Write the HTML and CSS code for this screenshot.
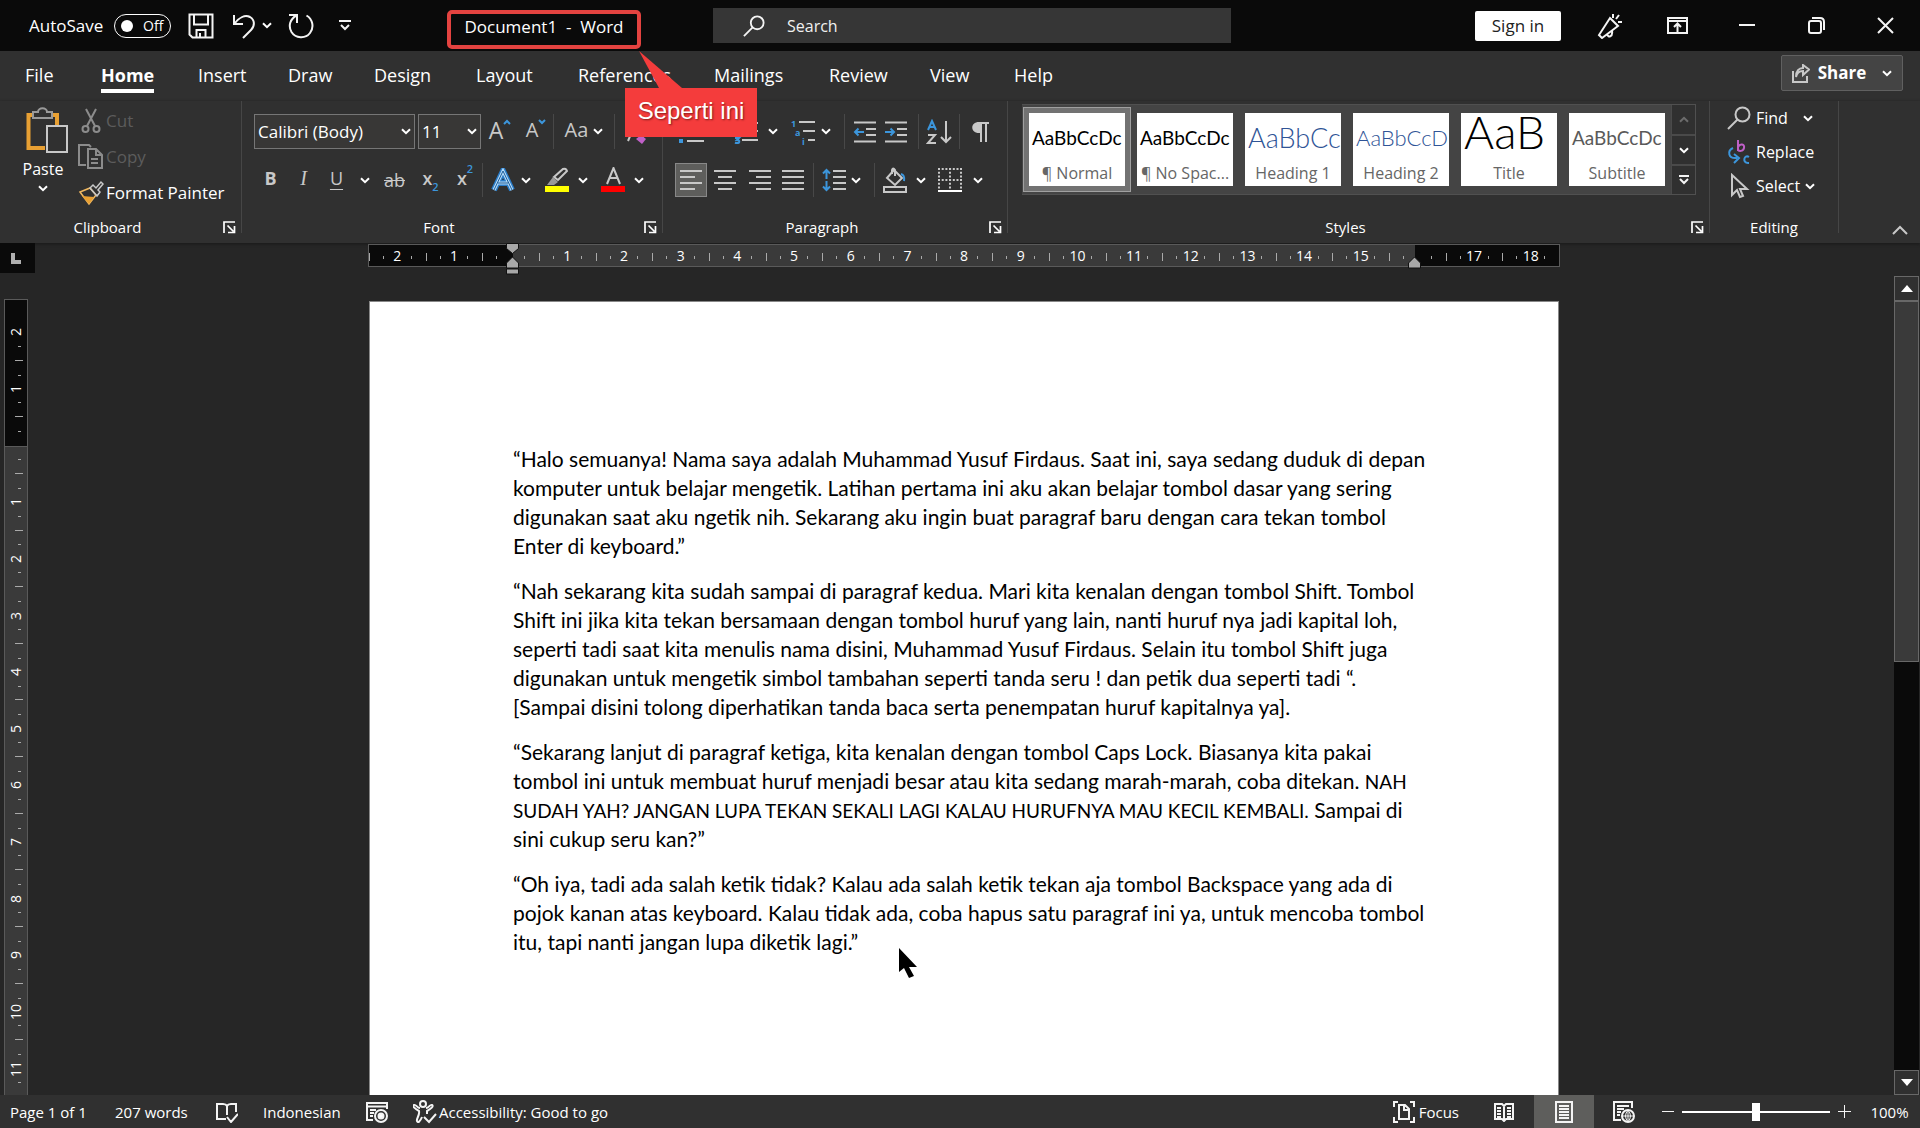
FILE: index.html
```html
<!DOCTYPE html>
<html lang="id">
<head>
<meta charset="utf-8">
<title>Document1 - Word</title>
<link rel="stylesheet" href="styles.css">
</head>
<body>
<svg class="sprite" aria-hidden="true">
  <symbol id="chev" viewBox="0 0 10 7"><path d="M1 1.200l4 4 4-4" fill="none" stroke="currentColor" stroke-width="2"/></symbol>
  <symbol id="launch" viewBox="0 0 13 13"><path d="M1 12V1h11M4.500 4.500l6 6M11.500 5v6.500H5" fill="none" stroke="currentColor" stroke-width="1.700"/></symbol>
  <symbol id="lens" viewBox="0 0 24 24"><circle cx="15.500" cy="8.500" r="7"/><path d="M10.500 13.500L1 23"/></symbol>
</svg>

<header class="titlebar">
  <div class="quick">
    <label class="autosave" for="autosave">AutoSave</label>
    <span class="toggle"><input type="checkbox" id="autosave"><span class="toggle-text">Off</span></span>
    <button class="ic save" aria-label="Save"><svg width="26" height="26" viewBox="0 0 26 26"><path d="M1.500 1.500h23v23H4.500l-3-3zM6 2v9.500h14V2M8.500 24v-7h9v7M12 20v4"/></svg></button>
    <button class="ic undo" aria-label="Undo"><svg width="24" height="26" viewBox="0 0 24 26"><path d="M2 2v9h9M2.500 10.500C7 4.500 13 1.500 18 4c5 3 5 9 1 13l-8 8"/></svg></button>
    <button class="ic undo-more" aria-label="Undo list"><svg class="chev"><use href="#chev"/></svg></button>
    <button class="ic redo" aria-label="Repeat"><svg width="26" height="26" viewBox="0 0 26 26"><path d="M1 2h8v8M8.500 2.500C2 6 0 13 3.500 19c4 6.500 14 7 18.500 1 4.500-6 2.500-14-3.500-17.500"/></svg></button>
    <button class="ic customize" aria-label="Customize Quick Access Toolbar"><svg width="12" height="11" viewBox="0 0 12 11"><path d="M0 1h12M2 5l4 4 4-4"/></svg></button>
  </div>
  <h1 class="doc-title">Document1&nbsp; -&nbsp; Word</h1>
  <label class="search">
    <svg width="22" height="22" viewBox="0 0 24 24"><use href="#lens"/></svg>
    <input type="text" placeholder="Search" aria-label="Search">
  </label>
  <div class="window">
    <button class="signin">Sign in</button>
    <button class="ic" aria-label="Coming soon"><svg width="26" height="26" viewBox="0 0 26 26"><path d="M13 5l8 8L5 25l-3-3zM10 21c1 4 6 3 5-3M16 1v4M22 2l-3 4M25 9h-4"/></svg></button>
    <button class="ic" aria-label="Ribbon display options"><svg width="21" height="17" viewBox="0 0 21 17"><path d="M1 1h19v15H1zM1 4h19M10.500 15V6.500M7 10l3.500-3.500L14 10"/></svg></button>
    <button class="ic" aria-label="Minimize"><svg width="16" height="16" viewBox="0 0 16 16"><path d="M0 7h16"/></svg></button>
    <button class="ic" aria-label="Restore"><svg width="17" height="17" viewBox="0 0 17 17"><rect x="1" y="4" width="12" height="12" rx="2"/><path d="M4 1h8q4 0 4 4v8"/></svg></button>
    <button class="ic close" aria-label="Close"><svg width="17" height="17" viewBox="0 0 17 17"><path d="M1 1l15 15M16 1L1 16"/></svg></button>
  </div>
</header>

<nav class="tabs">
  <div class="tab-list">
    <button>File</button><button class="active">Home</button><button>Insert</button><button>Draw</button><button>Design</button><button>Layout</button><button>References</button><button>Mailings</button><button>Review</button><button>View</button><button>Help</button>
  </div>
  <button class="share"><svg class="ln" width="18" height="19" viewBox="0 0 18 19"><path d="M1 7v11h14v-6M4 13c1-5 4-6 7-6v4l6-5.500L11 1v3C7 4 4 7 4 13z"/></svg>Share<svg class="chev"><use href="#chev"/></svg></button>
</nav>

<section class="ribbon">
  <div class="group clipboard">
    <div class="clip-body">
      <button class="paste"><svg width="42" height="46" viewBox="0 0 42 46" fill="none"><path d="M10 8H2.500v33H19" stroke="#e8a033" stroke-width="4"/><path d="M25 8h6v10" stroke="#e8a033" stroke-width="4"/><path d="M7 5h5c0-5 9-5 9 0h5v6H7z" stroke="#9a9a9a" stroke-width="2" fill="#303030"/><rect x="21" y="19" width="20" height="26" stroke="#c8c8c8" stroke-width="2" fill="#303030"/></svg><span>Paste</span><svg class="chev"><use href="#chev"/></svg></button>
      <div class="clip-list">
        <button disabled><svg class="dim" width="26" height="26" viewBox="0 0 26 26"><path d="M8 1l9 17M18 1L9 18"/><circle cx="7.500" cy="21" r="3"/><circle cx="18.500" cy="21" r="3"/></svg>Cut</button>
        <button disabled><svg class="dim" width="26" height="26" viewBox="0 0 26 26"><path d="M8 21H1V1h10l2 2M10 5h8l6 6v13H10zM18 5v6h6M13 15h7M13 19h7"/></svg>Copy</button>
        <button><svg width="26" height="26" viewBox="0 0 26 26" fill="none"><path d="M2 12l10-4 6 7-7 9z" stroke="#f0b860" stroke-width="1.500"/><path d="M4 16l12 1-5 7z" fill="#e8a033"/><path d="M12 8l3-3 3 3 5-6 2 2-5 6 2 2-3 4z" stroke="#c8c8c8" stroke-width="1.500"/></svg>Format Painter</button>
      </div>
    </div>
    <footer><span>Clipboard</span><button class="launch" aria-label="Clipboard settings"><svg><use href="#launch"/></svg></button></footer>
  </div>

  <div class="group font">
    <div class="tools">
      <div class="row font-1">
        <span class="combo"><select aria-label="Font"><option>Calibri (Body)</option></select><svg class="chev"><use href="#chev"/></svg></span>
        <span class="combo"><select aria-label="Font size"><option>11</option></select><svg class="chev"><use href="#chev"/></svg></span>
        <button aria-label="Increase font size"><span class="lt">A</span><svg class="blue sup" width="8" height="6" viewBox="0 0 8 6"><path d="M1 5l3-3 3 3"/></svg></button>
        <button aria-label="Decrease font size"><span class="lt small">A</span><svg class="blue sup" width="8" height="6" viewBox="0 0 8 6"><path d="M1 1l3 3 3-3"/></svg></button>
        <i class="sep"></i>
        <button class="case" aria-label="Change case"><span class="lt small">Aa</span><svg class="chev"><use href="#chev"/></svg></button>
        <i class="sep"></i>
        <button aria-label="Clear formatting"><svg width="26" height="26" viewBox="0 0 26 26"><path class="ln" d="M2 22L10 3l7 17"/><path d="M10 20l5-4 5 4-4 5z" fill="#c060c8"/></svg></button>
      </div>
      <div class="row font-2">
        <button class="bold">B</button><button class="italic">I</button><button class="under">U</button>
        <button aria-label="Underline style"><svg class="chev"><use href="#chev"/></svg></button>
        <button class="strike">ab</button>
        <button class="script">x<sub>2</sub></button>
        <button class="script">x<sup>2</sup></button>
        <i class="sep"></i>
        <button class="end" aria-label="Text effects"><svg width="24" height="24" viewBox="0 0 24 24"><path d="M3 22L12 3l9 19M7 15h10" fill="none" stroke="#2a7cc8" stroke-width="6"/><path d="M3 22L12 3l9 19M7 15h10" fill="none" stroke="#b8dcf8" stroke-width="3"/><path d="M3 22L12 3l9 19M7 15h10" fill="none" stroke="#1c5c98" stroke-width="1"/></svg></button>
        <button aria-label="Text effects list"><svg class="chev"><use href="#chev"/></svg></button>
        <button class="end" aria-label="Highlight colour"><svg width="24" height="26" viewBox="0 0 24 26"><path class="ln" d="M9 10l9-8q3-1 4 2l-9 9z"/><path d="M8 10l5 5-4 3H2z" fill="#999"/><path d="M0 19h24v6H0z" fill="#ff0"/></svg></button>
        <button aria-label="Highlight list"><svg class="chev"><use href="#chev"/></svg></button>
        <button class="end" aria-label="Font colour"><svg width="24" height="26" viewBox="0 0 24 26"><path class="ln" d="M6 17l6.500-16L19 17M8 11h9"/><path d="M0 19h24v6H0z" fill="#f00"/></svg></button>
        <button aria-label="Font colour list"><svg class="chev"><use href="#chev"/></svg></button>
      </div>
    </div>
    <footer><span>Font</span><button class="launch" aria-label="Font settings"><svg><use href="#launch"/></svg></button></footer>
  </div>

  <div class="group">
    <div class="tools">
      <div class="row para-1">
        <button aria-label="Bullets"><svg width="26" height="22" viewBox="0 0 26 22"><path class="ln" d="M9 3h17M9 11h17M9 20h17"/><path d="M1 1h4v4H1zM1 9h4v4H1zM1 18h4v4H1z" fill="#3c96dc"/></svg></button>
        <button aria-label="Bullet list"><svg class="chev"><use href="#chev"/></svg></button>
        <button class="end" aria-label="Numbering"><svg width="24" height="24" viewBox="0 0 24 24"><path class="ln" d="M8 3h16M8 11h16M8 20h16"/><path class="blue" d="M1 18h4l-2 2q3 0 2 2.500-2 1-4 0"/></svg></button>
        <button aria-label="Numbering list"><svg class="chev"><use href="#chev"/></svg></button>
        <button class="end" aria-label="Multilevel list"><svg width="24" height="26" viewBox="0 0 24 26"><path class="ln" d="M8 3h16M12 12h12M17 21h7"/><text x="0" y="8">1</text><text x="4" y="17">a</text><text x="11" y="26">i</text></svg></button>
        <button aria-label="Multilevel styles"><svg class="chev"><use href="#chev"/></svg></button>
        <i class="sep"></i>
        <button aria-label="Decrease indent"><svg class="ln" width="24" height="22" viewBox="0 0 24 22"><path d="M1 1.500h22M13 8h10M13 14h10M1 20.500h22"/><path class="blue" d="M11 11H2M5.500 7.500L2 11l3.500 3.500"/></svg></button>
        <button aria-label="Increase indent"><svg class="ln" width="24" height="22" viewBox="0 0 24 22"><path d="M1 1.500h22M13 8h10M13 14h10M1 20.500h22"/><path class="blue" d="M1 11h9M6.500 7.500L10 11l-3.500 3.500"/></svg></button>
        <i class="sep"></i>
        <button aria-label="Sort"><svg width="26" height="26" viewBox="0 0 26 26"><path class="blue" d="M2 11L6 2l4 9M3 8h6"/><path class="ln" d="M2 16h7l-7 8h8M20 2v21M15 18l5 5 5-5"/></svg></button>
        <i class="sep"></i>
        <button aria-label="Show marks"><svg width="18" height="22" viewBox="0 0 18 22"><path d="M8 12C-1 12-1 1 8 1h10v2h-2v18h-2V3h-3v18H9V12z" fill="#c8c8c8"/></svg></button>
      </div>
      <div class="row para-2">
        <button class="on" aria-label="Align left"><svg class="ln" width="22" height="22" viewBox="0 0 22 22"><path d="M0 2h22M0 8h15M0 14h22M0 20h15"/></svg></button>
        <button aria-label="Centre"><svg class="ln" width="22" height="22" viewBox="0 0 22 22"><path d="M0 2h22M4 8h14M0 14h22M4 20h14"/></svg></button>
        <button aria-label="Align right"><svg class="ln" width="22" height="22" viewBox="0 0 22 22"><path d="M0 2h22M7 8h15M0 14h22M7 20h15"/></svg></button>
        <button aria-label="Justify"><svg class="ln" width="22" height="22" viewBox="0 0 22 22"><path d="M0 2h22M0 8h22M0 14h22M0 20h22"/></svg></button>
        <i class="sep"></i>
        <button class="end" aria-label="Line spacing"><svg class="ln" width="24" height="24" viewBox="0 0 24 24"><path d="M11 3h13M11 9h13M11 15h13M11 21h13"/><path class="blue" d="M4.500 2v9M1 5.500L4.500 2 8 5.500M4.500 13v9M1 18.500L4.500 22 8 18.500"/></svg></button>
        <button aria-label="Spacing list"><svg class="chev"><use href="#chev"/></svg></button>
        <i class="sep"></i>
        <button aria-label="Shading"><svg class="ln" width="24" height="26" viewBox="0 0 24 26"><path d="M11 3l8 8-7 7-8-7zM9 7V3q1-3 3 0v6"/><path class="blue" d="M18 7q4 1 3 7"/><rect x="1" y="20" width="22" height="5"/></svg></button>
        <button aria-label="Shading list"><svg class="chev"><use href="#chev"/></svg></button>
        <button class="end" aria-label="Borders"><svg class="ln" width="24" height="24" viewBox="0 0 24 24"><path d="M0 1h23M0 12h23M1 0v21M12 0v21M23 0v21" stroke-dasharray="2 1.700"/><path d="M0 23h24" stroke="#fff"/></svg></button>
        <button aria-label="Border list"><svg class="chev"><use href="#chev"/></svg></button>
      </div>
    </div>
    <footer><span>Paragraph</span><button class="launch" aria-label="Paragraph settings"><svg><use href="#launch"/></svg></button></footer>
  </div>

  <div class="group styles">
    <div class="gallery">
      <div class="cards">
        <button class="card selected"><span class="prev">AaBbCcDc</span><span class="name">¶ Normal</span></button>
        <button class="card"><span class="prev">AaBbCcDc</span><span class="name">¶ No Spac...</span></button>
        <button class="card"><span class="prev h1">AaBbCc</span><span class="name">Heading 1</span></button>
        <button class="card"><span class="prev h2">AaBbCcD</span><span class="name">Heading 2</span></button>
        <button class="card"><span class="prev title">AaB</span><span class="name">Title</span></button>
        <button class="card"><span class="prev sub">AaBbCcDc</span><span class="name">Subtitle</span></button>
      </div>
      <div class="scroll">
        <button disabled aria-label="Previous styles"><svg class="chev up"><use href="#chev"/></svg></button>
        <button aria-label="Next styles"><svg class="chev"><use href="#chev"/></svg></button>
        <button aria-label="More styles"><svg class="ln white" width="12" height="10" viewBox="0 0 12 10"><path d="M1 1h10M2 4l4 4 4-4"/></svg></button>
      </div>
    </div>
    <footer><span>Styles</span><button class="launch" aria-label="Style settings"><svg><use href="#launch"/></svg></button></footer>
  </div>

  <div class="group editing">
    <div class="edit-list">
      <button><svg class="ln" width="24" height="24" viewBox="0 0 24 24"><use href="#lens"/></svg><span class="find">Find</span><svg class="chev"><use href="#chev"/></svg></button>
      <button><svg class="ln" width="24" height="26" viewBox="0 0 24 26"><path class="blue" d="M6 9c-6 3-5 11 4 10M7 15l5 4-5 5M22 18c-5-3-7 6-1 6h1"/><path stroke="#c060c8" d="M11 1v11M11 8c2-4 7-3 6 1s-5 3-6 2"/></svg><span>Replace</span></button>
      <button><svg class="ln" width="24" height="26" viewBox="0 0 24 26"><path d="M5 2v20l5-5 3 7 3-1-3-7h7z"/></svg><span>Select</span><svg class="chev"><use href="#chev"/></svg></button>
    </div>
    <footer><span>Editing</span></footer>
  </div>
  <button class="collapse" aria-label="Collapse the ribbon"><svg class="ln" width="16" height="10" viewBox="0 0 16 10"><path d="M1 9l7-7 7 7"/></svg></button>
</section>

<div class="callout"><svg width="44" height="37" viewBox="0 0 44 37"><path d="M0 0l43 37H20z" fill="#f43c3c"/></svg><span>Seperti ini</span></div>

<main class="work">
  <div class="side">
    <button class="corner" aria-label="Tab stop"><svg width="10" height="11" viewBox="0 0 10 11"><path d="M0 0h4v7h6v4H0z" fill="#b0b0b0"/></svg></button>
    <div class="vruler"><span class="bare"><b>2</b></span><span><b>1</b></span><span></span><span><b>1</b></span><span><b>2</b></span><span><b>3</b></span><span><b>4</b></span><span><b>5</b></span><span><b>6</b></span><span><b>7</b></span><span><b>8</b></span><span><b>9</b></span><span><b>10</b></span><span><b>11</b></span></div>
  </div>
  <div class="canvas">
    <div class="hruler">
      <span>2</span><span>1</span><span></span><span>1</span><span>2</span><span>3</span><span>4</span><span>5</span><span>6</span><span>7</span><span>8</span><span>9</span><span>10</span><span>11</span><span>12</span><span>13</span><span>14</span><span>15</span><span></span><span>17</span><span>18</span>
      <svg class="indent" width="13" height="33" viewBox="0 0 13 33"><path d="M.5 1.500h12v5l-6 5-6-5zM.5 26v-5l6-6 6 6v5zM.5 27h12v5H.5z" fill="#a8a8a8" stroke="#111"/></svg>
      <svg class="indent right" width="13" height="33" viewBox="0 0 13 33"><path d="M.5 26v-5l6-6 6 6v5z" fill="#a8a8a8" stroke="#111"/></svg>
    </div>
    <article class="page">
      <p>“Halo semuanya! Nama saya adalah Muhammad Yusuf Firdaus. Saat ini, saya sedang duduk di depan<br>komputer untuk belajar mengetik. Latihan pertama ini aku akan belajar tombol dasar yang sering<br>digunakan saat aku ngetik nih. Sekarang aku ingin buat paragraf baru dengan cara tekan tombol<br>Enter di keyboard.”</p>
      <p>“Nah sekarang kita sudah sampai di paragraf kedua. Mari kita kenalan dengan tombol Shift. Tombol<br>Shift ini jika kita tekan bersamaan dengan tombol huruf yang lain, nanti huruf nya jadi kapital loh,<br>seperti tadi saat kita menulis nama disini, Muhammad Yusuf Firdaus. Selain itu tombol Shift juga<br>digunakan untuk mengetik simbol tambahan seperti tanda seru ! dan petik dua seperti tadi “.<br>[Sampai disini tolong diperhatikan tanda baca serta penempatan huruf kapitalnya ya].</p>
      <p>“Sekarang lanjut di paragraf ketiga, kita kenalan dengan tombol Caps Lock. Biasanya kita pakai<br>tombol ini untuk membuat huruf menjadi besar atau kita sedang marah-marah, coba ditekan. <span class="caps">NAH<br>SUDAH YAH? JANGAN LUPA TEKAN SEKALI LAGI KALAU HURUFNYA MAU KECIL KEMBALI.</span> Sampai di<br>sini cukup seru kan?”</p>
      <p>“Oh iya, tadi ada salah ketik tidak? Kalau ada salah ketik tekan aja tombol Backspace yang ada di<br>pojok kanan atas keyboard. Kalau tidak ada, coba hapus satu paragraf ini ya, untuk mencoba tombol<br>itu, tapi nanti jangan lupa diketik lagi.”</p>
      <svg class="pointer" width="18" height="31" viewBox="0 0 18 31"><path d="M0 0v24l5-4 5 10 5-2-5-9h8z"/></svg>
    </article>
  </div>
  <div class="vscroll">
    <button aria-label="Scroll up"><svg width="12" height="7" viewBox="0 0 12 7"><path d="M6 0l6 7H0z" fill="#fff"/></svg></button>
    <div class="track"><div class="thumb"></div></div>
    <button aria-label="Scroll down"><svg width="12" height="7" viewBox="0 0 12 7"><path d="M0 0h12L6 7z" fill="#fff"/></svg></button>
  </div>
</main>

<footer class="status">
  <div class="st-left">
    <button>Page 1 of 1</button><button>207 words</button>
    <button aria-label="Proofing"><svg class="ln white" width="22" height="22" viewBox="0 0 22 22"><path d="M10 18H1V3h6q3 0 4 2 1-2 4-2h5v8M11 5v9M11 16l4 5 7-8"/></svg></button>
    <button>Indonesian</button>
    <button aria-label="Macros"><svg class="ln white" width="22" height="22" viewBox="0 0 22 22"><path d="M7 19H1V2h20v6M1 5.500h20M4 9h6M4 12h4M4 15h3"/><circle cx="15" cy="15" r="6"/><circle cx="15" cy="15" r="2.500" fill="#fff"/></svg></button>
    <button><svg class="ln white" width="24" height="24" viewBox="0 0 24 24"><circle cx="10" cy="4" r="3"/><path d="M7 8C4 8 3 4 1 5s1 4 5 6c1 4-3 8-2 10s3 1 5-4M13 8c3 0 4-4 6-3s-1 4-5 6v3M11 17l5 5 7-8"/></svg>Accessibility: Good to go</button>
  </div>
  <div class="st-right">
    <button class="focus"><svg class="ln white" width="22" height="22" viewBox="0 0 22 22"><path d="M5 1H1v5M17 1h4v5M5 21H1v-5M17 21h4v-5M6 4h6l4 4v10H6zM11 4v5h5"/></svg>Focus</button>
    <button class="view" aria-label="Read mode"><svg class="ln white" width="20" height="20" viewBox="0 0 20 20"><path d="M1 2h7l2 2 2-2h7v15h-7l-2 2-2-2H1zM10 3v15M3 6h4M3 9h4M3 12h4M3 15h4M13 6h4M13 9h4M13 12h4M13 15h4"/></svg></button>
    <button class="view on" aria-label="Print layout"><svg class="ln white" width="18" height="22" viewBox="0 0 18 22"><path d="M1 1h16v20H1zM4 5h10M4 8h10M4 11h10M4 14h10M4 17h10"/></svg></button>
    <button class="view" aria-label="Web layout"><svg class="ln white" width="22" height="22" viewBox="0 0 22 22"><path d="M8 19H1V1h18v6M4 5h12M4 8h7M4 11h4M4 14h3"/><circle cx="15" cy="15" r="6"/><path d="M9 15h12M15 9v12M15 9q-5 6 0 12M15 9q5 6 0 12" stroke-width="1"/></svg></button>
    <button class="zoom-step" aria-label="Zoom out"><svg class="ln white" width="12" height="13" viewBox="0 0 12 13"><path d="M0 6.500h12" stroke-width="1"/></svg></button>
    <input type="range" min="0" max="100" value="50" aria-label="Zoom">
    <button class="zoom-step" aria-label="Zoom in"><svg class="ln white" width="13" height="13" viewBox="0 0 13 13"><path d="M0 6.500h13M6.500 0v13" stroke-width="1"/></svg></button>
    <button class="percent">100%</button>
  </div>
</footer>
</body>
</html>
```
FILE: styles.css
```css
* { box-sizing: border-box; }

body {
  margin: 0;
  min-height: 100vh;
  display: flex;
  flex-direction: column;
  background: #262626;
  color: #fff;
  font: 15px/20px "Open Sans", "Noto Sans", sans-serif;
}

button, input, select {
  font: inherit;
  color: inherit;
  background: none;
  border: 0;
  padding: 0;
  margin: 0;
}

button {
  display: flex;
  align-items: center;
  justify-content: center;
  white-space: nowrap;
}

svg { flex: none; display: block; }
.sprite { position: absolute; width: 0; height: 0; }
.chev { width: 10px; height: 7px; color: #fff; }
.up { transform: rotate(180deg); }
.ic svg, .search svg { fill: none; stroke: #f4f4f4; stroke-width: 2; }
.ln { fill: none; stroke: #c8c8c8; stroke-width: 2; }
.white { stroke: #f4f4f4; }
.dim { fill: none; stroke: #8c8c8c; stroke-width: 2; }
.blue { fill: none; stroke: #3c96dc; stroke-width: 2; }
svg text { fill: #3c96dc; font-size: 9px; font-weight: 700; }

/* title bar */
.titlebar {
  display: flex;
  align-items: center;
  height: 51px;
  background: #0a0a0a;
}
.quick { display: flex; align-items: center; width: 447px; padding-left: 29px; }
.autosave { width: 85px; font-size: 17px; }
.toggle {
  position: relative;
  display: flex;
  align-items: center;
  width: 57px;
  height: 24px;
  border: 1px solid #fff;
  border-radius: 12px;
}
.toggle input {
  appearance: none;
  width: 12px;
  height: 12px;
  margin: 0 10px 0 6px;
  border-radius: 50%;
  background: #fff;
}
.toggle-text { font-size: 14px; }
.save { margin-left: 17px; }
.undo { margin-left: 18px; }
.undo-more { margin-left: 6px; }
.redo { margin-left: 16px; }
.customize { margin-left: 25px; }
.doc-title {
  width: 194px;
  height: 39px;
  margin: 8px 0 0;
  border: 4px solid #e44340;
  border-radius: 5px;
  font-size: 17px;
  font-weight: 400;
  line-height: 26px;
  text-align: center;
}
.search {
  display: flex;
  align-items: center;
  flex: 0 1 518px;
  height: 35px;
  margin-left: 72px;
  padding-left: 30px;
  gap: 22px;
  background: #363636;
}
.search input { flex: 1; min-width: 0; font-size: 16px; outline: 0; }
.search input::placeholder { color: #f0f0f0; opacity: 1; }
.window {
  display: grid;
  grid-template-columns: 86px 98px 36px 104px 34px 87px;
  align-items: center;
  margin-left: auto;
}
.window .close { padding-left: 17px; }
.signin { height: 30px; border-radius: 2px; background: #fff; color: #222; font-size: 17px; }

/* tabs */
.tabs {
  display: flex;
  justify-content: space-between;
  height: 50px;
  padding: 4px 17px 0 25px;
  background: #303030;
}
.tab-list {
  display: grid;
  grid-template-columns: 76px 97px 90px 86px 102px 102px 136px 115px 101px 84px 60px;
  justify-items: start;
}
.tab-list button { font-size: 18px; height: 38px; border-bottom: 4px solid transparent; padding-top: 5px; }
.tab-list .active { font-weight: 700; border-color: #fff; }
.share {
  width: 122px;
  height: 36px;
  gap: 8px;
  border: 1px solid #606060;
  border-radius: 2px;
  background: #444;
  font-size: 17px;
  font-weight: 700;
}
.share .chev { margin-left: 8px; }

/* ribbon */
.ribbon {
  display: flex;
  height: 142px;
  background: #303030;
  box-shadow: 0 1px 3px #181818;
}
.group {
  display: flex;
  flex-direction: column;
  justify-content: space-between;
  margin-bottom: 10px;
  border-right: 1px solid #464646;
}
.group footer { display: flex; align-items: center; height: 22px; font-size: 15px; margin-bottom: -5px; }
.group footer span { flex: 1; text-align: center; }
.launch { width: 26px; padding-left: 3px; }
.launch svg { width: 13px; height: 13px; }
.clipboard { width: 242px; }
.font { width: 421px; }
.clip-body { display: flex; padding-top: 2px; }
.paste { width: 78px; flex-direction: column; justify-content: flex-start; padding: 4px 0 0 8px; gap: 6px; font-size: 16px; }
.paste svg:first-child { margin-left: 7px; }
.clip-list { display: flex; flex-direction: column; }
.clip-list button { height: 36px; gap: 2px; justify-content: flex-start; font-size: 17px; }
.clip-list button:disabled { color: #5c5c5c; }
.tools { display: flex; flex-direction: column; gap: 14px; padding: 13px 0 0 12px; }
.row { display: grid; align-items: stretch; height: 35px; }
.font-1 { grid-template-columns: 164px 63px 38px 34px 1px 60px 1px 47px; }
.font-2 { grid-template-columns: 33px 33px 33px 23px 37px 35px 34px 1px 32px 21px 33px 28px 28px 28px; padding-bottom: 1px; }
.para-1 { grid-template-columns: 32px 20px 31px 30px 27px 21px 16px 25px 38px 6px 35px 6px 35px; }
.para-2 { grid-template-columns: 32px 36px 33px 34px 6px 30px 20px 16px 26px 26px 28px 45px; padding-bottom: 1px; }
.para-2 button:last-child { padding-right: 14px; }
.end { justify-content: flex-end; }
.on { background: #5e5e5c; border: 1px solid #888; }
.sep { justify-self: center; width: 1px; background: #484848; }
.combo { position: relative; display: flex; }
.combo:first-child { margin-right: 3px; }
.combo select {
  appearance: none;
  width: 100%;
  padding-left: 3px;
  border: 1px solid #767676;
  background: #383736;
  font-size: 17px;
}
.combo .chev { position: absolute; right: 4px; top: 14px; }
.lt { color: #c8c8c8; font-size: 23px; padding-bottom: 4px; }
.lt.small { font-size: 20px; }
.sup { align-self: flex-start; margin-top: 5px; }
.case { gap: 5px; }
.bold, .italic, .under, .strike, .script { color: #c8c8c8; font-size: 18px; padding-bottom: 4px; }
.bold { font-weight: 700; }
.italic { font-family: "Liberation Serif", serif; font-style: italic; font-size: 20px; }
.under { text-decoration: underline; text-underline-offset: 4px; }
.strike { text-decoration: line-through; padding-bottom: 0; }
.script { font-weight: 600; }
.script sub, .script sup { color: #3c96dc; font-size: 11px; line-height: 12px; }
.script sub { align-self: flex-end; }
.script sup { align-self: flex-start; }

/* style gallery */
.styles { width: 702px; }
.gallery { display: flex; width: 674px; height: 91px; margin: 3px 0 0 14px; padding-left: 1px; border: 1px solid #505050; border-left: 0; background: #444; }
.cards { display: grid; grid-template-columns: repeat(6, 108px); align-items: center; }
.card {
  flex-direction: column;
  width: 108px;
  height: 85px;
  padding: 5px;
  border: 1px solid transparent;
}
.card.selected { border-color: #a0a0a0; background: #727272; }
.prev {
  width: 96px;
  height: 49px;
  padding: 0 3px;
  overflow: hidden;
  background: #fff;
  color: #000;
  font: 19px/49px Lato, sans-serif;
  text-align: left;
}
.name { width: 96px; height: 24px; background: #fff; color: #666; font-size: 16px; line-height: 22px; }
.h1, .h2 { color: #2f5496; font-weight: 300; font-size: 27px; }
.h2 { font-size: 22px; }
.title { font-weight: 300; font-size: 46px; line-height: 38px; }
.sub { color: #5a5a5a; }
.scroll { flex: 1; display: grid; grid-template-rows: 31px 30px 1fr; background: #303030; }
.scroll button { border-left: 1px solid #4a4a4a; border-bottom: 2px solid #4a4a4a; }
.scroll button:last-child { border-bottom: 0; }
.scroll button:disabled .chev { color: #6c6c6c; }

.editing { width: 129px; }
.edit-list { padding-left: 17px; }
.edit-list button { height: 34px; justify-content: flex-start; gap: 5px; font-size: 16px; }
.find { margin-right: 10px; }
.collapse { margin: auto 12px 8px auto; }

/* annotation over the ribbon */
.callout { position: absolute; left: 625px; top: 51px; }
.callout svg { margin-left: 14px; }
.callout span {
  display: block;
  width: 132px;
  height: 49px;
  background: #f43c3c;
  font: 24px/46px "Liberation Sans", Arial, sans-serif;
  text-align: center;
  text-shadow: 1px 1px 2px #7c1c1c;
}

/* work area */
.work { flex: 1; display: flex; overflow: hidden; }
.side { display: flex; flex-direction: column; width: 35px; }
.corner { height: 30px; padding-right: 4px; background: #0a0a0a; }
.vruler {
  flex: 1;
  display: flex;
  flex-direction: column;
  width: 24px;
  margin: 26px 0 -2px 4px;
  padding-top: 4px;
  border: 1px solid #5a5a5a;
  border-bottom: 0;
  background: linear-gradient(#0a0a0a 146px, #5a5a5a 146px, #5a5a5a 147px, #3a3a3a 147px);
}
.vruler span, .hruler span { flex: 1; font-size: 14px; }
.vruler span {
  display: flex;
  align-items: center;
  justify-content: center;
  background:
    linear-gradient(#aaa, #aaa) 13px 25% / 3px 1px,
    linear-gradient(#aaa, #aaa) 13px 75% / 3px 1px,
    linear-gradient(#aaa, #aaa) 10px 100% / 8px 1px;
  background-repeat: no-repeat;
}
.vruler .bare {
  background:
    linear-gradient(#aaa, #aaa) 13px 75% / 3px 1px,
    linear-gradient(#aaa, #aaa) 10px 100% / 8px 1px;
  background-repeat: no-repeat;
}
.vruler b { font-weight: 400; transform: rotate(-90deg); }
.canvas { flex: 1; display: flex; flex-direction: column; align-items: center; padding-right: 1px; }
.hruler {
  position: relative;
  flex: none;
  display: flex;
  width: 1192px;
  height: 23px;
  margin-top: 1px;
  border: 1px solid #5a5a5a;
  background: linear-gradient(90deg, #0a0a0a 144px, #3a3a3a 144px, #3a3a3a 1046px, #0a0a0a 1046px);
}
.hruler span {
  line-height: 21px;
  text-align: center;
  background:
    linear-gradient(#aaa, #aaa) 25% 11px / 1px 3px,
    linear-gradient(#aaa, #aaa) 75% 11px / 1px 3px,
    linear-gradient(#aaa, #aaa) 0 8px / 1px 8px;
  background-repeat: no-repeat;
}
.indent { position: absolute; left: 137px; top: -3px; }
.indent.right { left: auto; right: 138px; }
.page {
  position: relative;
  flex: 1;
  width: 1190px;
  margin-top: 34px;
  padding: 142px 0 0 143px;
  border: 1px solid #888;
  border-bottom: 0;
  background: #fff;
  color: #000;
  font: 21px/29px Lato, "Open Sans", sans-serif;
  white-space: nowrap;
}
.page p { margin: 0 0 16px; }
.caps { font-size: 19px; line-height: 1; }
.pointer { position: absolute; left: 529px; top: 646px; }
.vscroll { display: flex; flex-direction: column; width: 26px; padding: 33px 1px 0 0; }
.vscroll button { height: 25px; border: 1px solid #686868; background: #303030; }
.track { flex: 1; background: #0a0a0a; }
.thumb { height: 47%; border: 1px solid #686868; background: #3a3a3a; }

/* status bar */
.status { display: flex; justify-content: space-between; height: 33px; background: #303030; font-size: 15px; }
.st-left { display: grid; grid-template-columns: 105px 101px 47px 103px 47px auto; justify-items: start; padding-left: 10px; }
.st-left button { gap: 2px; }
.st-right { display: flex; padding-right: 11px; }
.focus { gap: 4px; margin-right: 15px; }
.view { width: 60px; }
.view.on { border: 0; }
.zoom-step { width: 28px; }
.st-right input {
  appearance: none;
  align-self: center;
  width: 148px;
  height: 18px;
  background: linear-gradient(#fff, #fff) center / 100% 2px no-repeat;
}
.st-right input::-webkit-slider-thumb { appearance: none; width: 8px; height: 18px; background: #fff; }
.percent { width: 39px; margin-left: 12px; }
```
